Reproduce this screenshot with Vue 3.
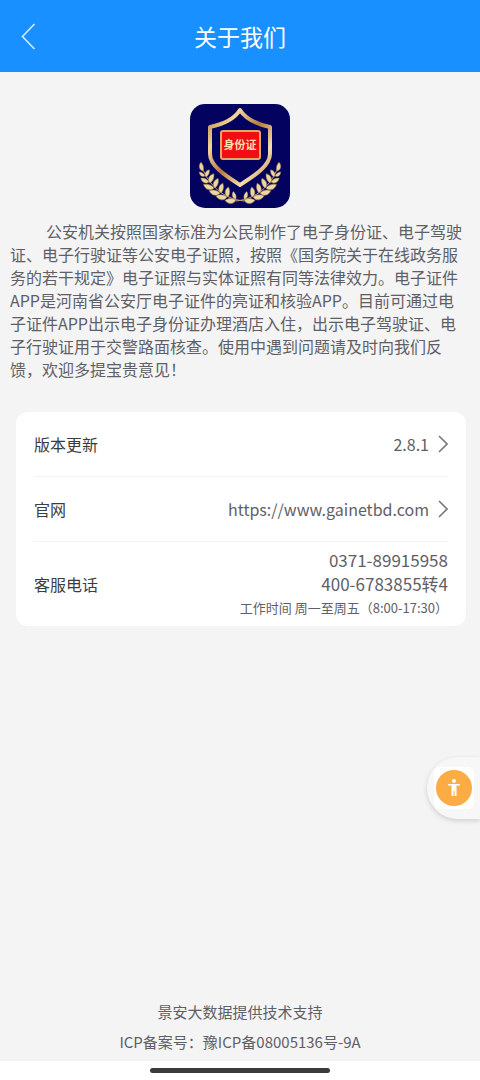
<template>
  <div class="about-page">
    <header class="nav-bar">
      <button class="back-btn" type="button" aria-label="返回">
        <svg class="back-icon" viewBox="0 0 16 28">
          <path d="M14.5 2 L2.5 14.5 L14.5 27" />
        </svg>
      </button>
      <h1 class="nav-title">关于我们</h1>
    </header>

    <main class="content">
      <svg class="logo" viewBox="0 0 100 104" role="img" aria-label="身份证">
        <defs>
          <linearGradient id="gold" x1="0" y1="0" x2="1" y2="1">
            <stop offset="0" stop-color="#b98240" />
            <stop offset="0.25" stop-color="#f3d59b" />
            <stop offset="0.5" stop-color="#b67b3c" />
            <stop offset="0.75" stop-color="#f6dfae" />
            <stop offset="1" stop-color="#b17a3a" />
          </linearGradient>
          <g id="branch">
            <path class="stem" d="M54 97 C34 95 19 82 12 63" />
            <path
              v-for="(leaf, index) in leaves"
              :key="index"
              class="leaf"
              d="M0 0 C2 -4 7 -4 10 0 C7 2 3 2 0 0 Z"
              :transform="`translate(${leaf.x} ${leaf.y}) rotate(${leaf.angle}) scale(${leaf.size})`"
            />
          </g>
        </defs>
        <rect width="100" height="104" rx="15" fill="#03035f" />
        <path
          class="shield"
          d="M50 6 C45 14 34 20 20 23 L20 50 C20 62 36 72 50 81 C64 72 80 62 80 50 L80 23 C66 20 55 14 50 6 Z"
        />
        <rect class="badge" x="31" y="27" width="39" height="28" rx="2" />
        <text class="badge-text" x="50" y="45">身份证</text>
        <use href="#branch" />
        <use href="#branch" transform="translate(100 0) scale(-1 1)" />
      </svg>

      <p class="intro">{{ intro }}</p>

      <section class="card">
        <div class="row">
          <span class="label">版本更新</span>
          <button class="value" type="button">
            {{ version }}
            <svg class="arrow" viewBox="0 0 10 18"><path d="M1 1 L9 9 L1 17" /></svg>
          </button>
        </div>
        <div class="row">
          <span class="label">官网</span>
          <a class="value" :href="website">
            {{ website }}
            <svg class="arrow" viewBox="0 0 10 18"><path d="M1 1 L9 9 L1 17" /></svg>
          </a>
        </div>
        <div class="row phone-row">
          <span class="label">客服电话</span>
          <div class="phones">
            <a class="phone" href="tel:0371-89915958">0371-89915958</a>
            <a class="phone" href="tel:400-6783855">400-6783855转4</a>
            <span class="work-time">工作时间 周一至周五（8:00-17:30）</span>
          </div>
        </div>
      </section>
    </main>

    <button class="assist-btn" type="button" aria-label="无障碍">
      <span class="assist-inner">
        <svg class="assist-icon" viewBox="0 0 36 36">
          <circle cx="18" cy="18" r="18" fill="#fbac45" />
          <circle cx="18" cy="11" r="2" fill="#fff" />
          <path d="M12 14 H24 V15.5 H20.5 V26 H18.5 V21 H17.5 V26 H15.5 V15.5 H12 Z" fill="#fff" />
        </svg>
      </span>
    </button>

    <footer class="footer">
      <p class="footer-line">景安大数据提供技术支持</p>
      <p class="footer-line">ICP备案号：豫ICP备08005136号-9A</p>
    </footer>
    <div class="home-bar"><span class="home-line"></span></div>
  </div>
</template>

<script setup>
import { ref } from 'vue';

const version = ref('2.8.1');
const website = 'https://www.gainetbd.com';
const intro = '公安机关按照国家标准为公民制作了电子身份证、电子驾驶证、电子行驶证等公安电子证照，按照《国务院关于在线政务服务的若干规定》电子证照与实体证照有同等法律效力。电子证件APP是河南省公安厅电子证件的亮证和核验APP。目前可通过电子证件APP出示电子身份证办理酒店入住，出示电子驾驶证、电子行驶证用于交警路面核查。使用中遇到问题请及时向我们反馈，欢迎多提宝贵意见！';

// 左侧麦穗叶片，右侧镜像
const leaves = [
  { x: 13, y: 67, angle: -103, size: 0.9 },
  { x: 15, y: 72, angle: -145, size: 0.7 },
  { x: 16, y: 73, angle: -65, size: 0.8 },
  { x: 19, y: 78, angle: -155, size: 0.9 },
  { x: 20, y: 79, angle: -68, size: 1 },
  { x: 24, y: 84, angle: -162, size: 1.1 },
  { x: 25, y: 84, angle: -72, size: 1 },
  { x: 30, y: 89, angle: -168, size: 1.1 },
  { x: 31, y: 89, angle: -80, size: 1 },
  { x: 37, y: 93, angle: -175, size: 1.1 },
  { x: 38, y: 93, angle: -88, size: 1 },
  { x: 46, y: 96, angle: 178, size: 1.1 },
  { x: 46, y: 95, angle: -110, size: 0.8 }
];
</script>

<style>
body {
  margin: 0;
  background: #f4f4f4;
}
</style>

<style scoped>
.about-page {
  position: relative;
  min-height: 100vh;
  display: flex;
  flex-direction: column;
  background: #f4f4f4;
  font-family: "Noto Sans CJK SC", sans-serif;
  color: #5f6066;
}

button {
  margin: 0;
  padding: 0;
  border: none;
  background: none;
  font-family: inherit;
  cursor: pointer;
}

.nav-bar {
  height: 72px;
  display: grid;
  grid-template-columns: 56px 1fr 56px;
  align-items: center;
  background: #1890ff;
}

.back-btn {
  height: 48px;
  display: flex;
  align-items: center;
  justify-content: center;
}

.back-icon {
  width: 16px;
  height: 28px;
  fill: none;
  stroke: #d5eaff;
  stroke-width: 1.6;
}

.nav-title {
  margin: 0;
  font-size: 23px;
  line-height: 32px;
  font-weight: 400;
  text-align: center;
  color: #fff;
}

.content {
  flex: 1;
  display: flex;
  flex-direction: column;
  padding-top: 32px;
}

.logo {
  width: 100px;
  height: 104px;
  align-self: center;
}

.shield {
  fill: none;
  stroke: url(#gold);
  stroke-width: 4;
  stroke-linejoin: round;
}

.badge {
  fill: #f20d12;
  stroke: #e2a868;
  stroke-width: 2;
}

.badge-text {
  font-size: 11px;
  font-weight: 700;
  text-anchor: middle;
  fill: #ffdfb5;
}

.stem {
  fill: none;
  stroke: #c9a364;
  stroke-width: 1;
}

.leaf {
  fill: #ecd7a0;
  stroke: #a98548;
  stroke-width: 0.5;
}

.intro {
  margin: 12px 12px 0 10px;
  font-size: 16px;
  line-height: 23px;
  text-indent: 36px;
  text-spacing-trim: space-all;
}

.card {
  margin: 31px 14px 0 16px;
  padding: 0 18px;
  border-radius: 12px;
  background: #fff;
}

.row {
  min-height: 64px;
  display: flex;
  align-items: center;
  justify-content: space-between;
  border-bottom: 1px solid #f3f3f3;
}

.phone-row {
  min-height: 84px;
  border-bottom: none;
}

.label {
  font-size: 16px;
  line-height: 24px;
  color: #3c3c3e;
}

.value {
  display: flex;
  align-items: center;
  gap: 9px;
  font-size: 16px;
  line-height: 24px;
  color: #5f6066;
  text-decoration: none;
}

.arrow {
  width: 10px;
  height: 18px;
  fill: none;
  stroke: #77787c;
  stroke-width: 1.6;
}

.phones {
  display: flex;
  flex-direction: column;
  align-items: flex-end;
}

.phone {
  font-size: 17px;
  line-height: 24px;
  color: #5f6066;
  text-decoration: none;
}

.work-time {
  font-size: 13px;
  line-height: 24px;
}

.assist-btn {
  position: absolute;
  top: 757px;
  right: 0;
  width: 53px;
  height: 62px;
  display: flex;
  align-items: center;
  justify-content: flex-end;
  padding-right: 6px;
  border-radius: 31px 0 0 31px;
  background: #f7f7f7;
  box-shadow: 0 2px 5px rgba(0, 0, 0, 0.15);
}

.assist-inner {
  width: 40px;
  height: 42px;
  display: flex;
  align-items: center;
  justify-content: center;
  border-radius: 6px;
  background: #fff;
}

.assist-icon {
  width: 36px;
  height: 36px;
}

.footer {
  padding: 24px 0 4px;
  text-align: center;
}

.footer-line {
  margin: 0;
  font-size: 15px;
  line-height: 30px;
}

.home-bar {
  height: 19px;
  display: flex;
  align-items: center;
  justify-content: center;
  background: #fff;
}

.home-line {
  width: 180px;
  height: 5px;
  border-radius: 3px;
  background: #3b3b3b;
}
</style>
